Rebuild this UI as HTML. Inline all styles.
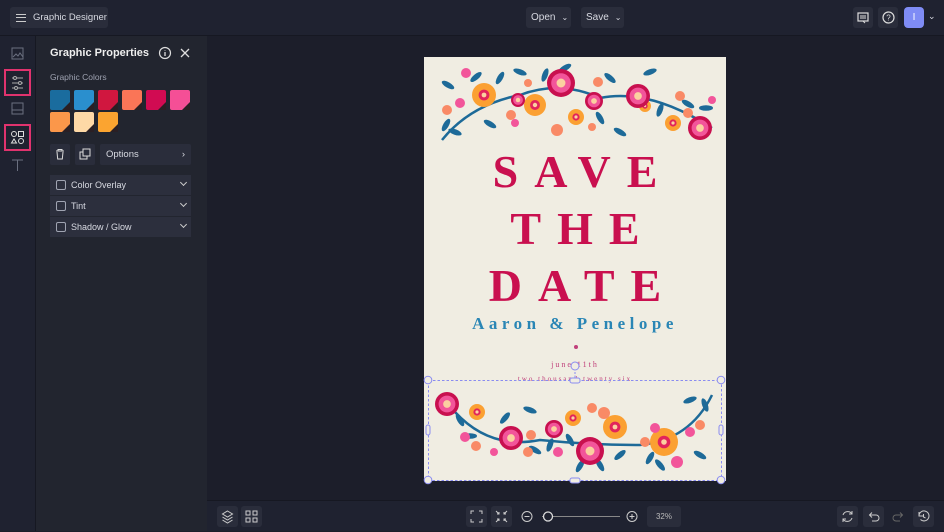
<!DOCTYPE html>
<html><head><meta charset="utf-8"><style>
*{box-sizing:border-box;margin:0;padding:0}
body{width:944px;height:531px;overflow:hidden;background:#1c1e2a;font-family:"Liberation Sans",sans-serif;color:#d8dae2;position:relative}
.top{position:absolute;left:0;top:0;width:944px;height:36px;background:#1f2230;border-bottom:1px solid #161822}
.btn{position:absolute;background:#2a2d3b;border-radius:3px;font-size:10px;color:#d8dae2;display:flex;align-items:center;white-space:nowrap}
.side{position:absolute;left:0;top:36px;width:36px;height:495px;background:#1f2230;border-right:1px solid #161822}
.panel{position:absolute;left:36px;top:36px;width:171px;height:495px;background:#22252f}
.sw{position:absolute;width:20px;height:20px;border-radius:2px}
.sw i{position:absolute;right:0;bottom:0;width:8px;height:8px;background:#2a1f24;clip-path:polygon(100% 0,100% 100%,0 100%)}
.row{position:absolute;left:14px;width:141px;height:20px;background:#2c2f3d;font-size:9px;display:flex;align-items:center}
.cb{width:10px;height:10px;border:1px solid #a0a4b2;border-radius:2px;margin:0 5px 0 6px}
.chev{position:absolute;right:5px;top:5px;width:5px;height:5px;border-right:1.3px solid #ccc;border-bottom:1.3px solid #ccc;transform:rotate(45deg)}
.bot{position:absolute;left:207px;top:500px;width:737px;height:31px;background:#1f2230;border-top:1px solid #161822}
.ib{position:absolute;width:21px;height:21px;background:#2a2d3b;border-radius:3px}
.card{position:absolute;left:424px;top:57px;width:302px;height:424px;background:#f0ede2}
.big{position:absolute;left:0;width:302px;text-align:center;font-family:"Liberation Serif",serif;font-weight:bold;color:#c9104f;font-size:46px;letter-spacing:16px;padding-left:16px}
</style></head><body>
<div class="top">
 <div class="btn" style="left:10px;top:7px;width:98px;height:21px"><span style="margin-left:6px;width:10px;height:8px;border-top:1.5px solid #ccc;border-bottom:1.5px solid #ccc;position:relative;display:inline-block"><i style="position:absolute;left:0;top:2px;width:10px;border-top:1.5px solid #ccc"></i></span><span style="margin-left:7px;font-size:9.5px">Graphic Designer</span></div>
 <div class="btn" style="left:526px;top:7px;width:45px;height:21px;padding-left:5px">Open <span style="font-size:8px;margin-left:6px">⌄</span></div>
 <div class="btn" style="left:581px;top:7px;width:43px;height:21px;padding-left:5px">Save <span style="font-size:8px;margin-left:6px">⌄</span></div>
 <div class="btn" style="left:853px;top:7px;width:20px;height:21px;justify-content:center"><svg width="12" height="12"><rect x="1" y="1" width="10" height="8" fill="none" stroke="#ddd" stroke-width="1.2"/><path d="M3 4h6M3 6h6M6 9l2 2" stroke="#ddd"/></svg></div>
 <div class="btn" style="left:878px;top:7px;width:20px;height:21px;justify-content:center"><svg width="13" height="13"><circle cx="6.5" cy="6.5" r="5.5" fill="none" stroke="#ddd" stroke-width="1.2"/><text x="6.5" y="9.5" font-size="8" fill="#ddd" text-anchor="middle" font-family="Liberation Sans">?</text></svg></div>
 <div style="position:absolute;left:904px;top:7px;width:20px;height:21px;background:#7f8cf5;border-radius:4px;color:#fff;font-size:10px;text-align:center;line-height:21px">I</div>
 <div style="position:absolute;left:928px;top:11px;font-size:9px">⌄</div>
</div>
<div class="side">
 <svg width="36" height="140" style="position:absolute;top:0">
  <rect x="12" y="12" width="11" height="11" fill="none" stroke="#6b7080"/><path d="M13 21l3-3 2 2 2-3 3 4" stroke="#6b7080" fill="none"/>
  <rect x="5" y="34" width="25" height="25" fill="none" stroke="#e0336e" stroke-width="2"/>
  <path d="M12 42h11M12 47h11M12 52h11" stroke="#aaa"/><circle cx="15" cy="42" r="1.5" fill="#1f2230" stroke="#aaa"/><circle cx="20" cy="47" r="1.5" fill="#1f2230" stroke="#aaa"/><circle cx="16" cy="52" r="1.5" fill="#1f2230" stroke="#aaa"/>
  <rect x="12" y="67" width="11" height="11" fill="none" stroke="#6b7080"/><path d="M12 74h11" stroke="#6b7080"/>
  <rect x="5" y="89" width="25" height="25" fill="none" stroke="#e0336e" stroke-width="2"/>
  <circle cx="14" cy="98" r="2.5" fill="none" stroke="#ddd"/><rect x="18.5" y="95.5" width="5" height="5" fill="none" stroke="#ddd"/><path d="M11.5 107l2.5-4 2.5 4z" fill="none" stroke="#ddd"/><circle cx="21" cy="105" r="2.5" fill="none" stroke="#ddd"/>
  <path d="M12 124h11M17.5 124v11" stroke="#6b7080"/>
 </svg>
</div>
<div class="panel">
 <div style="position:absolute;left:14px;top:11px;font-size:11px;font-weight:bold;color:#eee">Graphic Properties</div>
 <svg width="40" height="14" style="position:absolute;left:122px;top:10px"><circle cx="7" cy="7" r="5.5" fill="none" stroke="#ddd" stroke-width="1.2"/><path d="M7 6v4M7 4v.5" stroke="#ddd" stroke-width="1.3"/><path d="M23 3l8 8M31 3l-8 8" stroke="#ddd" stroke-width="1.3"/></svg>
 <div style="position:absolute;left:14px;top:36px;font-size:8.5px;color:#9ea2b0">Graphic Colors</div>
 <div class="sw" style="left:14px;top:54px;background:#1a6c9e"><i></i></div>
 <div class="sw" style="left:38px;top:54px;background:#2a8fce"><i></i></div>
 <div class="sw" style="left:62px;top:54px;background:#d0173f"><i></i></div>
 <div class="sw" style="left:86px;top:54px;background:#fa7557"><i></i></div>
 <div class="sw" style="left:110px;top:54px;background:#d10b52"><i></i></div>
 <div class="sw" style="left:134px;top:54px;background:#f54f96"><i></i></div>
 <div class="sw" style="left:14px;top:76px;background:#fb974a"><i></i></div>
 <div class="sw" style="left:38px;top:76px;background:#fed9a6"><i></i></div>
 <div class="sw" style="left:62px;top:76px;background:#fba430"><i></i></div>
 <div style="position:absolute;left:14px;top:108px;width:20px;height:21px;background:#2a2d3b;border-radius:2px"><svg width="20" height="21"><path d="M6 7h8M8 7V5.5h4V7M7 8l.7 7h4.6l.7-7" fill="none" stroke="#ddd"/></svg></div>
 <div style="position:absolute;left:39px;top:108px;width:20px;height:21px;background:#2a2d3b;border-radius:2px"><svg width="20" height="21"><rect x="5" y="8" width="7" height="7" fill="none" stroke="#ddd"/><rect x="8" y="5" width="7" height="7" fill="#2a2d3b" stroke="#ddd"/></svg></div>
 <div style="position:absolute;left:64px;top:108px;width:91px;height:21px;background:#2a2d3b;border-radius:2px;font-size:9.5px;line-height:21px;padding-left:6px">Options<span style="position:absolute;right:6px">›</span></div>
 <div class="row" style="top:139px"><div class="cb"></div>Color Overlay<div class="chev"></div></div>
 <div class="row" style="top:160px"><div class="cb"></div>Tint<div class="chev"></div></div>
 <div class="row" style="top:181px"><div class="cb"></div>Shadow / Glow<div class="chev"></div></div>
</div>
<div class="card">
 <div class="big" style="top:90px;line-height:50px">SAVE</div>
 <div class="big" style="top:147px;line-height:50px">THE</div>
 <div class="big" style="top:204px;line-height:50px">DATE</div>
 <div style="position:absolute;left:0;top:257px;width:302px;text-align:center;font-family:'Liberation Serif',serif;font-weight:bold;color:#2a86b5;font-size:17px;letter-spacing:4.5px">Aaron &amp; Penelope</div>
 <div style="position:absolute;left:150px;top:288px;width:4px;height:4px;border-radius:2px;background:#c0407a"></div>
 <div style="position:absolute;left:0;top:303px;width:302px;text-align:center;font-family:'Liberation Serif',serif;color:#c0407a;font-size:8px;letter-spacing:2px">june 11th</div>
 <div style="position:absolute;left:0;top:318px;width:302px;text-align:center;font-family:'Liberation Serif',serif;color:#c0407a;font-size:7px;letter-spacing:2px">two thousand twenty six</div>
</div>
<svg id="g" width="944" height="531" style="position:absolute;left:0;top:0"></svg>
<div class="bot">
 <div class="ib" style="left:10px;top:5px"><svg width="21" height="21"><path d="M10.5 5l5 3-5 3-5-3z M5.5 11l5 3 5-3 M5.5 14l5 3 5-3" fill="none" stroke="#ccc"/></svg></div>
 <div class="ib" style="left:34px;top:5px"><svg width="21" height="21"><rect x="5" y="5" width="4" height="4" fill="none" stroke="#ccc"/><rect x="12" y="5" width="4" height="4" fill="none" stroke="#ccc"/><rect x="5" y="12" width="4" height="4" fill="none" stroke="#ccc"/><rect x="12" y="12" width="4" height="4" fill="none" stroke="#ccc"/></svg></div>
 <div class="ib" style="left:259px;top:5px"><svg width="21" height="21"><path d="M5 8V5h3M13 5h3v3M16 13v3h-3M8 16H5v-3" fill="none" stroke="#ccc"/></svg></div>
 <div class="ib" style="left:284px;top:5px"><svg width="21" height="21"><path d="M5 5l3 3M8 6v2H6M16 5l-3 3M13 6v2h2M5 16l3-3M6 13h2v2M16 16l-3-3M15 13h-2v2" fill="none" stroke="#ccc"/></svg></div>
 <svg width="130" height="21" style="position:absolute;left:313px;top:5px"><circle cx="7" cy="10.5" r="5" fill="none" stroke="#ccc"/><path d="M4.5 10.5h5" stroke="#ccc"/><path d="M22 10.5h78" stroke="#888"/><circle cx="28" cy="10.5" r="4.5" fill="#1f2230" stroke="#ddd" stroke-width="1.3"/><circle cx="112" cy="10.5" r="5" fill="none" stroke="#ccc"/><path d="M109.5 10.5h5M112 8v5" stroke="#ccc"/></svg>
 <div class="ib" style="left:440px;top:5px;width:34px;font-size:8px;color:#bbb;text-align:center;line-height:21px">32%</div>
 <div class="ib" style="left:630px;top:5px"><svg width="21" height="21"><path d="M6 9a5 5 0 0 1 9-1M15 12a5 5 0 0 1-9 1M15 5v3h-3M6 16v-3h3" fill="none" stroke="#ccc"/></svg></div>
 <div class="ib" style="left:656px;top:5px"><svg width="21" height="21"><path d="M7 9h6a3 3 0 0 1 0 6H9M9 6.5L6.5 9 9 11.5" fill="none" stroke="#ccc"/></svg></div>
 <div class="ib" style="left:681px;top:5px;background:none"><svg width="21" height="21"><path d="M14 9H8a3 3 0 0 0 0 6h4M12 6.5L14.5 9 12 11.5" fill="none" stroke="#666"/></svg></div>
 <div class="ib" style="left:706px;top:5px"><svg width="21" height="21"><path d="M6 10a5 5 0 1 1 1.5 3.5M6 6v4h4M10.5 8v3l2 1" fill="none" stroke="#ccc"/></svg></div>
</div>
<script>
var s='';
function stem(d){s+='<path d="'+d+'" fill="none" stroke="#1d6a98" stroke-width="2.5"/>';}
function leaf(x,y,a,l){s+='<ellipse cx="'+x+'" cy="'+y+'" rx="'+(l||7)+'" ry="2.8" fill="#1d6a98" transform="rotate('+a+' '+x+' '+y+')"/>';}
function org(x,y,r){s+='<circle cx="'+x+'" cy="'+y+'" r="'+r+'" fill="#fba032"/><circle cx="'+x+'" cy="'+y+'" r="'+(r*0.45)+'" fill="#e2245b"/><circle cx="'+x+'" cy="'+y+'" r="'+(r*0.2)+'" fill="#fbd0a0"/>';}
function rose(x,y,r){s+='<circle cx="'+x+'" cy="'+y+'" r="'+r+'" fill="#c8104f"/><circle cx="'+x+'" cy="'+y+'" r="'+(r*0.7)+'" fill="#f2559a"/><circle cx="'+x+'" cy="'+y+'" r="'+(r*0.32)+'" fill="#fbd0a0"/>';}
function bud(x,y,r,c){s+='<circle cx="'+x+'" cy="'+y+'" r="'+r+'" fill="'+(c||'#f98a66')+'"/>';}
stem('M442 140 Q470 105 520 95 Q560 80 600 98 Q650 88 712 128');
stem('M455 412 Q490 450 540 440 Q590 445 640 445 Q690 440 712 395');
[[448,85,30],[476,77,-40],[500,78,-60],[520,72,20],[545,75,-70],[565,68,-30],[610,78,40],[650,72,-20],[660,110,-70],[688,104,30],[706,108,0],[446,125,-60],[455,132,20],[490,124,30],[600,118,60],[620,132,30],[470,436,0],[460,420,60],[505,418,-50],[535,450,30],[550,445,-70],[570,440,60],[580,466,-60],[600,465,60],[650,458,-60],[660,465,50],[690,400,-20],[705,405,70],[700,455,30],[620,455,-40],[530,410,20]].forEach(function(l){leaf(l[0],l[1],l[2]);});
org(484,95,12);org(535,105,11);org(576,117,8);org(673,123,8);org(645,106,6);
rose(561,83,14);rose(594,101,9);rose(638,96,12);rose(700,128,12);rose(518,100,7);
bud(466,73,5,'#f2559a');bud(460,103,5,'#f2559a');bud(447,110,5);bud(598,82,5);bud(680,96,5);bud(688,113,5);bud(557,130,6);bud(511,115,5);bud(515,123,4,'#f2559a');bud(528,83,4);bud(592,127,4);bud(712,100,4,'#f2559a');
rose(447,404,12);org(477,412,8);rose(511,438,12);rose(554,429,9);org(573,418,8);rose(590,451,14);org(615,427,12);org(664,442,14);
bud(465,437,5,'#f2559a');bud(476,446,5);bud(531,435,5);bud(528,452,5);bud(558,452,5,'#f2559a');bud(655,428,5,'#f2559a');bud(690,432,5,'#f2559a');bud(677,462,6,'#f2559a');bud(645,442,5);bud(700,425,5);bud(592,408,5);bud(604,413,6);bud(494,452,4,'#f2559a');
s+='<rect x="428.5" y="380.5" width="293" height="100" fill="none" stroke="#8a8cf0" stroke-dasharray="2.5 2"/>';
s+='<path d="M575 372v8" stroke="#8a8cf0" stroke-dasharray="2 1.5"/><circle cx="575" cy="366" r="4" fill="#f0ede2" stroke="#8a8cf0"/>';
[[428,380],[721,380],[428,480],[721,480]].forEach(function(p){s+='<circle cx="'+p[0]+'" cy="'+p[1]+'" r="3.8" fill="#f0ede2" stroke="#8a8cf0"/>';});
s+='<rect x="570" y="378" width="10" height="5" rx="2" fill="#f0ede2" stroke="#8a8cf0"/><rect x="570" y="478" width="10" height="5" rx="2" fill="#f0ede2" stroke="#8a8cf0"/><rect x="426" y="425" width="4" height="10" rx="2" fill="#f0ede2" stroke="#8a8cf0"/><rect x="719" y="425" width="4" height="10" rx="2" fill="#f0ede2" stroke="#8a8cf0"/>';
document.getElementById('g').innerHTML=s;
</script>
</body></html>
